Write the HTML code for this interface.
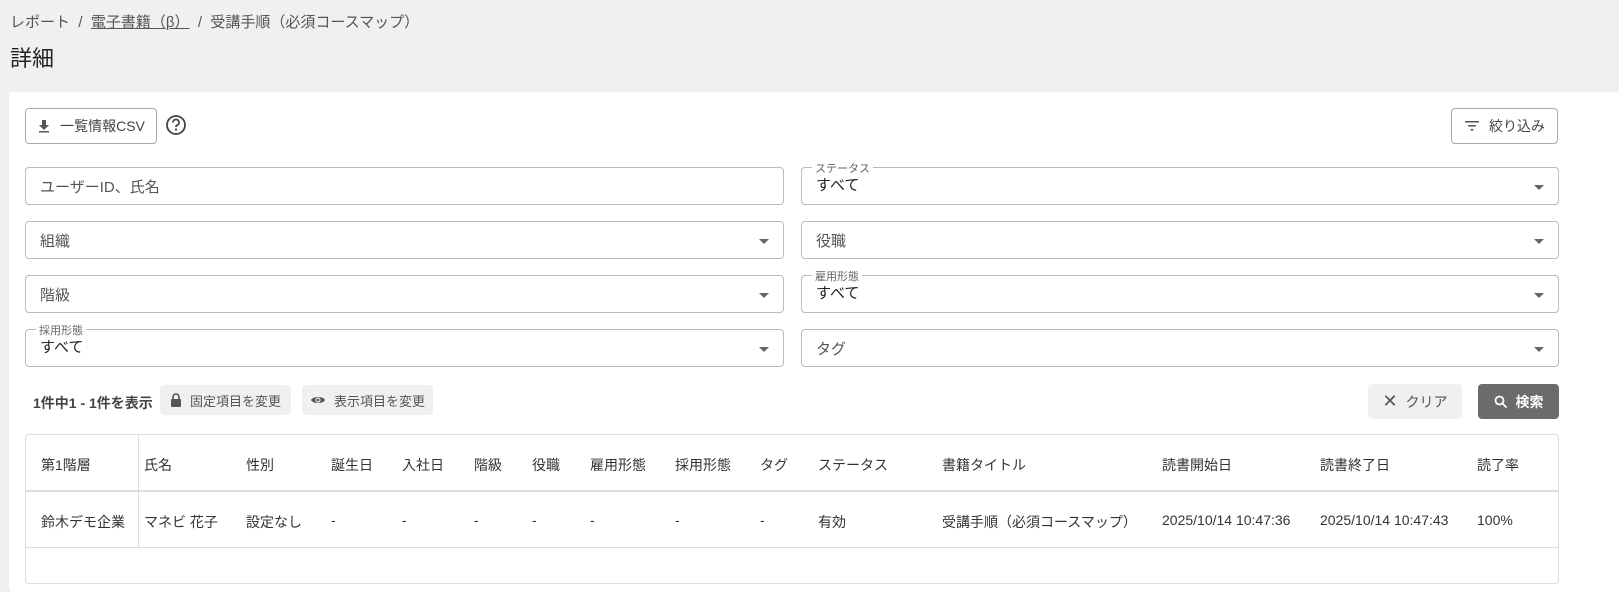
<!DOCTYPE html>
<html><head><meta charset="utf-8"><style>
*{box-sizing:border-box;margin:0;padding:0}
body{width:1619px;height:576px;overflow:hidden;background:#eff0f2;font-family:"Liberation Sans","Noto Sans CJK JP",sans-serif;color:#333;position:relative}
.a{position:absolute}
.crumb{left:10px;top:11px;font-size:15px;color:#555}
.crumb u{text-decoration:underline}
h1{position:absolute;left:10px;top:41px;font-size:22px;font-weight:normal;color:#222}
.card{position:absolute;left:9px;top:92px;width:1620px;height:500px;background:#fff;border-radius:4px}
.btn{position:absolute;border:1px solid #aaa;border-radius:4px;background:#fff;font-size:14px;color:#444;display:flex;align-items:center;justify-content:center;gap:9px}
.inp{position:absolute;height:38px;border:1px solid #bbb;border-radius:4px;background:#fff;font-size:15px;color:#555;padding-left:14px;display:flex;align-items:center}
.inp.v{color:#222}
.inp .lab{position:absolute;left:10px;top:-8px;background:#fff;padding:0 3px;font-size:11px;color:#666}
.inp .arr{position:absolute;right:14px;top:17px;width:0;height:0;border-left:5px solid transparent;border-right:5px solid transparent;border-top:5px solid #666}
.inp.lb{align-items:flex-end;padding-bottom:9px}
.gbtn{position:absolute;background:#eff0f2;border-radius:4px;font-size:13px;color:#555;display:flex;align-items:center;justify-content:center;gap:8px}
.tb{position:absolute;left:25px;top:434px;width:1534px;height:150px;border:1px solid #ddd;border-radius:4px}
.t{position:absolute;font-size:14px;color:#333;white-space:nowrap}
</style></head><body>
<div class="a crumb">レポート&nbsp;&nbsp;/&nbsp;&nbsp;<u>電子書籍（β）</u>&nbsp;&nbsp;/&nbsp;&nbsp;受講手順（必須コースマップ）</div>
<h1>詳細</h1>
<div class="card"></div>
<div class="btn" style="left:25px;top:108px;width:132px;height:36px"><svg width="14" height="14" viewBox="0 0 14 14"><path d="M5 1h4v5h3L7 11 2 6h3z" fill="#555"/><rect x="2" y="12" width="10" height="1.5" fill="#555"/></svg>一覧情報CSV</div>
<svg class="a" style="left:165px;top:114px" width="22" height="22" viewBox="0 0 22 22"><circle cx="11" cy="11" r="9" fill="none" stroke="#444" stroke-width="1.8"/><path d="M8 8.5a3 3 0 1 1 4 2.8c-.8.4-1 .9-1 1.7" fill="none" stroke="#444" stroke-width="1.8"/><circle cx="11" cy="15.5" r="1.1" fill="#444"/></svg>
<div class="btn" style="left:1451px;top:108px;width:107px;height:36px"><svg width="16" height="12" viewBox="0 0 16 12"><rect x="1" y="1" width="14" height="1.5" fill="#555"/><rect x="4" y="5" width="8" height="1.5" fill="#555"/><rect x="6.5" y="9" width="3" height="1.5" fill="#555"/></svg>絞り込み</div>

<div class="inp" style="left:25px;top:167px;width:759px">ユーザーID、氏名</div>
<div class="inp v lb" style="left:801px;top:167px;width:758px"><span class="lab">ステータス</span>すべて<span class="arr"></span></div>
<div class="inp" style="left:25px;top:221px;width:759px">組織<span class="arr"></span></div>
<div class="inp" style="left:801px;top:221px;width:758px">役職<span class="arr"></span></div>
<div class="inp" style="left:25px;top:275px;width:759px">階級<span class="arr"></span></div>
<div class="inp v lb" style="left:801px;top:275px;width:758px"><span class="lab">雇用形態</span>すべて<span class="arr"></span></div>
<div class="inp v lb" style="left:25px;top:329px;width:759px"><span class="lab">採用形態</span>すべて<span class="arr"></span></div>
<div class="inp" style="left:801px;top:329px;width:758px">タグ<span class="arr"></span></div>

<div class="t" style="left:33px;top:393px;font-weight:bold;color:#444">1件中1 - 1件を表示</div>
<div class="gbtn" style="left:160px;top:385px;width:131px;height:30px"><svg width="12" height="15" viewBox="0 0 12 15"><path d="M3 6V4a3 3 0 0 1 6 0v2" fill="none" stroke="#555" stroke-width="1.6"/><rect x="1" y="6" width="10" height="8" rx="1" fill="#555"/></svg>固定項目を変更</div>
<div class="gbtn" style="left:302px;top:385px;width:131px;height:30px"><svg width="16" height="12" viewBox="0 0 16 12"><path d="M1 6c2-4 12-4 14 0-2 4-12 4-14 0z" fill="#555"/><circle cx="8" cy="6" r="2.6" fill="#eff0f2"/><circle cx="8" cy="6" r="1.4" fill="#555"/></svg>表示項目を変更</div>
<div class="gbtn" style="left:1368px;top:384px;width:94px;height:35px;font-size:14px"><span style="font-size:18px;color:#555">✕</span>クリア</div>
<div class="gbtn" style="left:1478px;top:384px;width:81px;height:35px;background:#6b6b6b;color:#fff;font-weight:bold;font-size:14px"><svg width="14" height="14" viewBox="0 0 14 14"><circle cx="5.5" cy="5.5" r="4" fill="none" stroke="#fff" stroke-width="1.8"/><path d="M8.5 8.5l4 4" stroke="#fff" stroke-width="1.8"/></svg>検索</div>

<div class="tb"></div>
<div class="a" style="left:25px;top:490px;width:1534px;height:2px;background:#ddd"></div>
<div class="a" style="left:25px;top:547px;width:1534px;height:1px;background:#ddd"></div>
<div class="a" style="left:138px;top:434px;width:1px;height:114px;background:#ddd"></div>
<div class="t" style="left:41px;top:455px">第1階層</div>
<div class="t" style="left:144px;top:455px">氏名</div>
<div class="t" style="left:246px;top:455px">性別</div>
<div class="t" style="left:331px;top:455px">誕生日</div>
<div class="t" style="left:402px;top:455px">入社日</div>
<div class="t" style="left:474px;top:455px">階級</div>
<div class="t" style="left:532px;top:455px">役職</div>
<div class="t" style="left:590px;top:455px">雇用形態</div>
<div class="t" style="left:675px;top:455px">採用形態</div>
<div class="t" style="left:760px;top:455px">タグ</div>
<div class="t" style="left:818px;top:455px">ステータス</div>
<div class="t" style="left:942px;top:455px">書籍タイトル</div>
<div class="t" style="left:1162px;top:455px">読書開始日</div>
<div class="t" style="left:1320px;top:455px">読書終了日</div>
<div class="t" style="left:1477px;top:455px">読了率</div>

<div class="t" style="left:41px;top:512px">鈴木デモ企業</div>
<div class="t" style="left:144px;top:512px">マネビ 花子</div>
<div class="t" style="left:246px;top:512px">設定なし</div>
<div class="t" style="left:331px;top:512px">-</div>
<div class="t" style="left:402px;top:512px">-</div>
<div class="t" style="left:474px;top:512px">-</div>
<div class="t" style="left:532px;top:512px">-</div>
<div class="t" style="left:590px;top:512px">-</div>
<div class="t" style="left:675px;top:512px">-</div>
<div class="t" style="left:760px;top:512px">-</div>
<div class="t" style="left:818px;top:512px">有効</div>
<div class="t" style="left:942px;top:512px">受講手順（必須コースマップ）</div>
<div class="t" style="left:1162px;top:512px">2025/10/14 10:47:36</div>
<div class="t" style="left:1320px;top:512px">2025/10/14 10:47:43</div>
<div class="t" style="left:1477px;top:512px">100%</div>
</body></html>
